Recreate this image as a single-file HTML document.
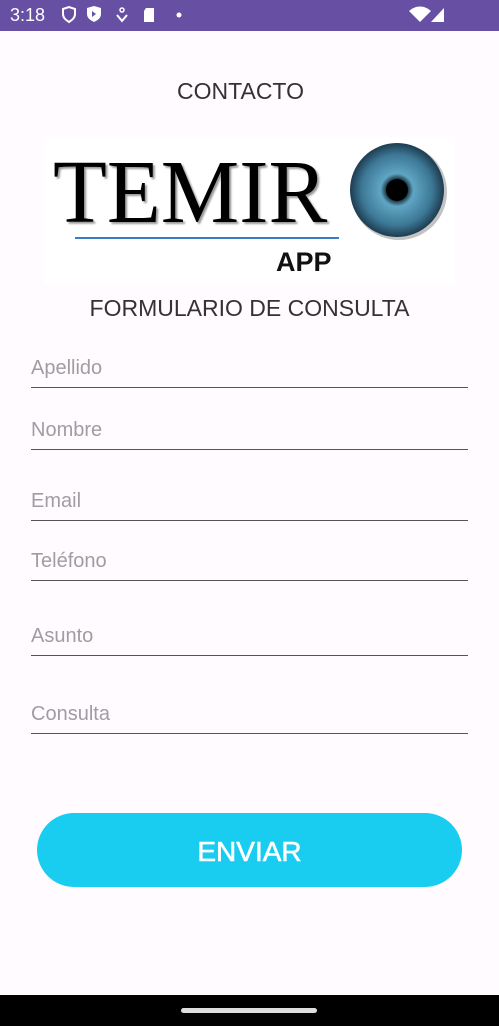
<!DOCTYPE html>
<html><head><meta charset="utf-8"><style>
*{margin:0;padding:0;box-sizing:border-box}
body{width:499px;height:1026px;background:#fffbfe;font-family:"Liberation Sans",sans-serif;position:relative;overflow:hidden}
.sb{position:absolute;left:0;top:0;width:499px;height:31px;background:#6750a4;color:#fff}
.sb .t{position:absolute;left:10px;top:5px;font-size:18px}
.ab{position:absolute;left:0;width:499px;text-align:center;color:#333;}
.f{position:absolute;left:31px;width:437px;border-bottom:1.3px solid #555;}
.f span{position:absolute;left:0;bottom:7px;font-size:20px;color:#a09ca4}
.btn{position:absolute;left:37px;top:813px;width:425px;height:74px;border-radius:37px;background:#18cdf0;color:#fff;font-size:28px;text-align:center;line-height:78px;-webkit-text-stroke:0.6px #fff}
.nav{position:absolute;left:0;top:995px;width:499px;height:31px;background:#000}
.nav i{position:absolute;left:181px;top:13px;width:136px;height:5px;border-radius:3px;background:#ddd}
</style></head><body>
<div class="sb"><span class="t">3:18</span>
<svg width="499" height="31" style="position:absolute;left:0;top:0">
<path d="M63 9l6-2 6 2v5c0 4-3 6-6 8-3-2-6-4-6-8z" fill="none" stroke="#fff" stroke-width="2"/>
<path d="M87 8l7-2 7 2v6c0 4-3 6-7 8-4-2-7-4-7-8z" fill="#fff"/><path d="M92 11l4 3-4 3z" fill="#6750a4"/>
<circle cx="122" cy="10" r="2" fill="none" stroke="#fff" stroke-width="1.5"/><path d="M117 15l5 6 5-6" fill="none" stroke="#fff" stroke-width="2"/>
<path d="M146 8h8v14h-10v-11z" fill="#fff"/>
<circle cx="179" cy="15" r="2.5" fill="#fff"/>
<path d="M409 11c7-6 15-6 22 0l-11 11z" fill="#fff"/>
<path d="M444 22l0-14-13 14z" fill="#fff"/>
</svg></div>
<div class="ab" style="top:78px;font-size:23px;padding-right:18px">CONTACTO</div>
<div style="position:absolute;left:44px;top:137px;width:411px;height:146px;background:#fff"></div>
<div style="position:absolute;left:53px;top:143px;font-family:'Liberation Serif',serif;font-size:90px;color:#000;transform:scaleX(0.98);transform-origin:left;text-shadow:2px 2px 2px #999;line-height:100px">TEMIR</div>
<svg width="110" height="110" style="position:absolute;left:345px;top:137px">
<defs><radialGradient id="g"><stop offset="0.2" stop-color="#0a1820"/><stop offset="0.35" stop-color="#5fa6c4"/><stop offset="0.75" stop-color="#3d7896"/><stop offset="1" stop-color="#1d3c50"/></radialGradient></defs>
<circle cx="54" cy="55" r="48" fill="#888" opacity=".5"/>
<circle cx="52" cy="53" r="47" fill="url(#g)"/><circle cx="52" cy="53" r="11" fill="#000"/></svg>
<div style="position:absolute;left:75px;top:237px;width:264px;height:2px;background:#3a7cc4"></div>
<div style="position:absolute;left:276px;top:247px;font-size:27px;font-weight:bold;color:#111">APP</div>
<div class="ab" style="top:295px;font-size:23px">FORMULARIO DE CONSULTA</div>
<div class="f" style="top:340px;height:48px"><span>Apellido</span></div>
<div class="f" style="top:400px;height:50px"><span>Nombre</span></div>
<div class="f" style="top:470px;height:51px"><span>Email</span></div>
<div class="f" style="top:530px;height:51px"><span>Teléfono</span></div>
<div class="f" style="top:605px;height:51px"><span>Asunto</span></div>
<div class="f" style="top:683px;height:51px"><span>Consulta</span></div>
<div class="btn">ENVIAR</div>
<div class="nav"><i></i></div>
</body></html>
